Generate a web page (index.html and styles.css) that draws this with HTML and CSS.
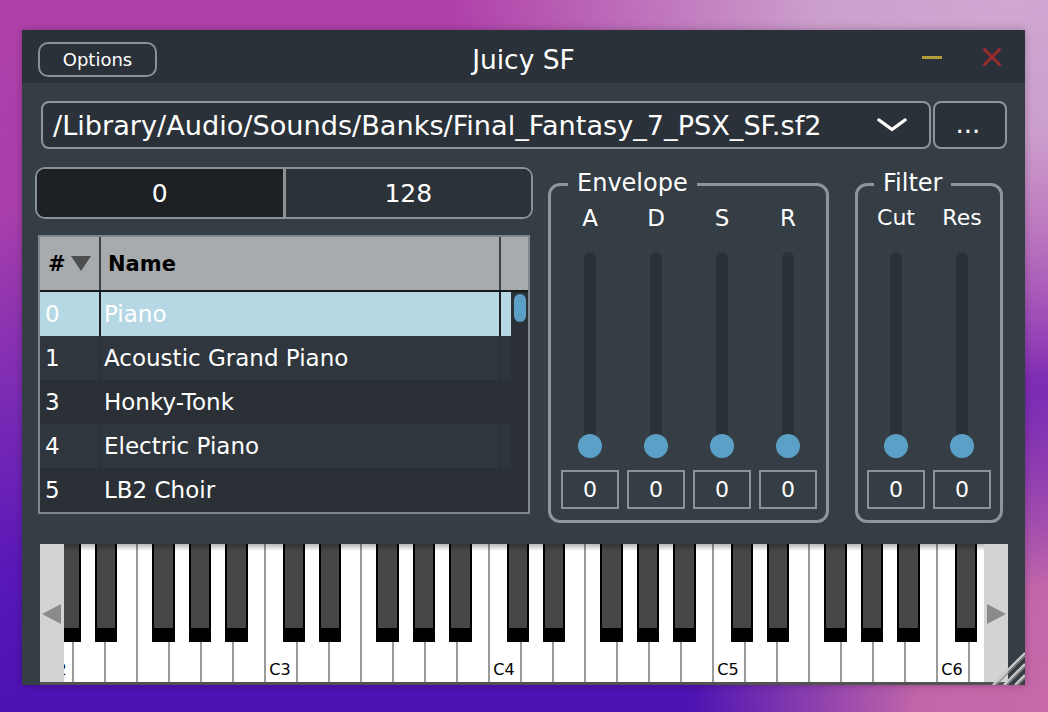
FILE: index.html
```html
<!DOCTYPE html>
<html>
<head>
<meta charset="utf-8">
<title>Juicy SF</title>
<link rel="stylesheet" href="styles.css">
</head>
<body>
<div class="window">
  <div class="titlebar">
    <div class="tb-left"><button class="options-btn">Options</button></div>
    <div class="title">Juicy SF</div>
    <div class="tb-right">
      <span class="min-btn"></span>
      <svg class="close-btn" width="20" height="20" viewBox="0 0 20 20"><path d="M1.5 1.5 L18.5 18.5 M18.5 1.5 L1.5 18.5" stroke="#a32b2b" stroke-width="2.6" fill="none"/></svg>
    </div>
  </div>

  <div class="path-row">
    <div class="combo">
      <span class="combo-text">/Library/Audio/Sounds/Banks/Final_Fantasy_7_PSX_SF.sf2</span>
      <svg class="chevron" width="30" height="14" viewBox="0 0 30 14"><path d="M2 2 L15 11.5 L28 2" stroke="#fff" stroke-width="3.4" fill="none" stroke-linecap="round" stroke-linejoin="round"/></svg>
    </div>
    <div class="browse-btn">...</div>
  </div>

  <div class="main">
    <div class="left-col">
      <div class="bank">
        <div class="bank-cell bank-sel">0</div>
        <div class="bank-sep"></div>
        <div class="bank-cell">128</div>
      </div>
      <div class="table">
        <div class="thead">
          <div class="th th-num"><span>#</span><svg width="20" height="15" viewBox="0 0 20 15"><path d="M0 0 H20 L10 15 Z" fill="#4b4d4f"/></svg></div>
          <div class="th-div"></div>
          <div class="th th-name">Name</div>
          <div class="th-div"></div>
          <div class="th"></div>
        </div>
        <div class="tbody">
          <div class="rows">
            <div class="row row-sel"><div class="cell num">0</div><div class="cdiv"></div><div class="cell name">Piano</div><div class="cdiv"></div><div class="cell"></div></div>
            <div class="row row-a"><div class="cell num">1</div><div class="cdiv"></div><div class="cell name">Acoustic Grand Piano</div><div class="cdiv"></div><div class="cell"></div></div>
            <div class="row row-b"><div class="cell num">3</div><div class="cdiv"></div><div class="cell name">Honky-Tonk</div><div class="cdiv"></div><div class="cell"></div></div>
            <div class="row row-a"><div class="cell num">4</div><div class="cdiv"></div><div class="cell name">Electric Piano</div><div class="cdiv"></div><div class="cell"></div></div>
            <div class="row row-b"><div class="cell num">5</div><div class="cdiv"></div><div class="cell name">LB2 Choir</div><div class="cdiv"></div><div class="cell"></div></div>
          </div>
          <div class="vscroll"><div class="vthumb"></div></div>
        </div>
      </div>
    </div>

    <div class="group envelope">
      <div class="group-title">Envelope</div>
      <div class="sliders">
        <div class="scol"><div class="slabel">A</div><div class="slider"><div class="track"></div><div class="thumb"></div></div><div class="sval">0</div></div>
        <div class="scol"><div class="slabel">D</div><div class="slider"><div class="track"></div><div class="thumb"></div></div><div class="sval">0</div></div>
        <div class="scol"><div class="slabel">S</div><div class="slider"><div class="track"></div><div class="thumb"></div></div><div class="sval">0</div></div>
        <div class="scol"><div class="slabel">R</div><div class="slider"><div class="track"></div><div class="thumb"></div></div><div class="sval">0</div></div>
      </div>
    </div>

    <div class="group filter">
      <div class="group-title">Filter</div>
      <div class="sliders">
        <div class="scol"><div class="slabel small">Cut</div><div class="slider"><div class="track"></div><div class="thumb"></div></div><div class="sval">0</div></div>
        <div class="scol"><div class="slabel small">Res</div><div class="slider"><div class="track"></div><div class="thumb"></div></div><div class="sval">0</div></div>
      </div>
    </div>
  </div>

  <div class="keyboard">
    <div class="wk"><span>C2</span></div><div class="wk"></div><div class="wk"></div><div class="wk"></div><div class="wk"></div><div class="wk"></div><div class="wk"></div>
    <div class="wk"><span>C3</span></div><div class="wk"></div><div class="wk"></div><div class="wk"></div><div class="wk"></div><div class="wk"></div><div class="wk"></div>
    <div class="wk"><span>C4</span></div><div class="wk"></div><div class="wk"></div><div class="wk"></div><div class="wk"></div><div class="wk"></div><div class="wk"></div>
    <div class="wk"><span>C5</span></div><div class="wk"></div><div class="wk"></div><div class="wk"></div><div class="wk"></div><div class="wk"></div><div class="wk"></div>
    <div class="wk"><span>C6</span></div><div class="wk"></div><div class="wk"></div>

    <div class="bk" style="left:18.56px"></div><div class="bk" style="left:55.04px"></div><div class="bk" style="left:112.32px"></div><div class="bk" style="left:148.8px"></div><div class="bk" style="left:185.28px"></div>
    <div class="bk" style="left:242.56px"></div><div class="bk" style="left:279.04px"></div><div class="bk" style="left:336.32px"></div><div class="bk" style="left:372.8px"></div><div class="bk" style="left:409.28px"></div>
    <div class="bk" style="left:466.56px"></div><div class="bk" style="left:503.04px"></div><div class="bk" style="left:560.32px"></div><div class="bk" style="left:596.8px"></div><div class="bk" style="left:633.28px"></div>
    <div class="bk" style="left:690.56px"></div><div class="bk" style="left:727.04px"></div><div class="bk" style="left:784.32px"></div><div class="bk" style="left:820.8px"></div><div class="bk" style="left:857.28px"></div>
    <div class="bk" style="left:914.56px"></div><div class="bk" style="left:951.04px"></div>

    <div class="kb-shadow"></div>
    <div class="kb-btn kb-left"><svg width="20" height="20" viewBox="0 0 20 20"><path d="M0 10 L19 0 V20 Z" fill="#8a8a8a"/></svg></div>
    <div class="kb-btn kb-right"><svg width="20" height="20" viewBox="0 0 20 20"><path d="M20 10 L1 0 V20 Z" fill="#8a8a8a"/></svg></div>
  </div>

  <svg class="resize-corner" width="34" height="37" viewBox="0 0 34 37">
    <path d="M2 37 L34 5" stroke="#c9c9c9" stroke-width="2.4"/>
    <path d="M5 37 L34 8" stroke="#8d8d8d" stroke-width="1.2"/>
    <path d="M13 37 L34 16" stroke="#c9c9c9" stroke-width="2.4"/>
    <path d="M16 37 L34 19" stroke="#8d8d8d" stroke-width="1.2"/>
    <path d="M24 37 L34 27" stroke="#c9c9c9" stroke-width="2.4"/>
    <path d="M27 37 L34 30" stroke="#8d8d8d" stroke-width="1.2"/>
  </svg>
</div>
</body>
</html>
```

FILE: styles.css
```css
* { box-sizing: border-box; }

html, body { margin: 0; padding: 0; }

body {
  width: 1048px;
  height: 712px;
  overflow: hidden;
  font-family: "DejaVu Sans", "Noto Sans", sans-serif;
  color: #fff;
  background:
    radial-gradient(ellipse 560px 380px at 1010px 0px, #d0a8d2 0%, #cc9ecc 35%, rgba(200, 150, 200, 0) 100%),
    radial-gradient(ellipse 380px 320px at 1070px 712px, #c86aa8 0%, #c266aa 40%, rgba(190, 100, 170, 0) 100%),
    linear-gradient(180deg, #b040a9 0%, #a83fac 30%, #7c2cb4 55%, #5a18b8 80%, #4c12b2 100%);
}

.window {
  position: relative;
  margin: 30px 0 0 22px;
  width: 1003px;
  height: 655px;
  background: #353d45;
  box-shadow: 0 0 8px rgba(0, 0, 0, 0.25);
  display: flex;
  flex-direction: column;
  overflow: hidden;
}

/* ---------- title bar ---------- */
.titlebar {
  height: 53px;
  flex: 0 0 53px;
  padding-top: 6px;
  background: #2a3138;
  display: grid;
  grid-template-columns: 1fr auto 1fr;
  align-items: center;
}

.options-btn {
  width: 119px;
  height: 35px;
  margin-left: 16px;
  padding: 0;
  border: 2px solid #8b9194;
  border-radius: 10px;
  background: transparent;
  color: #fff;
  font-family: "DejaVu Sans", sans-serif;
  font-size: 18px;
  display: block;
}

.title {
  font-size: 26.5px;
  line-height: 30px;
  color: #fff;
}

.tb-right {
  display: flex;
  justify-content: flex-end;
  align-items: center;
  gap: 40px;
  padding-right: 23px;
  margin-top: -5px;
}

.min-btn {
  display: block;
  width: 20px;
  height: 3px;
  background: #b39a3b;
}

.close-btn { display: block; }

/* ---------- path row ---------- */
.path-row {
  display: flex;
  gap: 2px;
  height: 48px;
  margin: 18px 18px 0 19px;
}

.combo {
  flex: 1;
  display: flex;
  align-items: center;
  justify-content: space-between;
  border: 2px solid #8e9598;
  border-radius: 8px;
  background: #2b3138;
  padding: 0 22px 0 10px;
}

.combo-text {
  font-size: 27.15px;
  white-space: nowrap;
}

.chevron { display: block; }

.browse-btn {
  width: 74px;
  border: 2px solid #8e9598;
  border-radius: 8px;
  background: #2b3138;
  font-size: 26px;
  display: flex;
  align-items: center;
  justify-content: center;
  padding: 0 4px 2px 0;
}

/* ---------- main area ---------- */
.main {
  display: flex;
  align-items: flex-start;
  margin-top: 18px;
  padding-left: 13px;
}

.left-col { width: 498px; }

.bank {
  height: 52px;
  display: flex;
  border: 2px solid #8b9296;
  border-radius: 10px;
  overflow: hidden;
  font-size: 25px;
}

.bank-cell {
  flex: 1;
  display: flex;
  align-items: center;
  justify-content: center;
  background: #2b3238;
}

.bank-cell.bank-sel { background: #1d2125; }

.bank-sep {
  width: 3px;
  background: #8b9296;
}

/* ---------- table ---------- */
.table {
  width: 492px;
  height: 279px;
  margin: 16px 0 0 3px;
  border: 2px solid #80878a;
  background: #2a3036;
}

.thead {
  display: grid;
  grid-template-columns: 59px 2px 398px 2px 27px;
  height: 55px;
  background: #a8abae;
  border-bottom: 2px solid #171a1d;
}

.th {
  display: flex;
  align-items: center;
  color: #000;
  font-weight: bold;
  font-size: 21px;
}

.th-num { padding-left: 8px; gap: 5px; }
.th-num svg { display: block; }
.th-name { padding-left: 7px; }

.th-div { background: #3d4144; }

.tbody { display: flex; height: 220px; }

.rows { width: 471px; }

.row {
  display: grid;
  grid-template-columns: 59px 2px 398px 2px 10px;
  height: 44px;
  font-size: 23px;
  line-height: 44px;
}

.row-a .cell { background: #2f363d; }
.row-b .cell { background: #2a3036; }
.row-sel .cell { background: #b5d8e4; }
.row-sel .cdiv { background: #1c2126; }

.cell { white-space: nowrap; }
.cell.num { padding-left: 5px; }
.cell.name { padding-left: 3px; }

.vscroll {
  width: 17px;
  padding: 2px 2px 0 3px;
}

.vthumb {
  width: 12px;
  height: 28px;
  border-radius: 6px;
  background: #5ba0c6;
}

/* ---------- groups ---------- */
.group {
  height: 340px;
  margin-top: 16px;
  border: 3px solid #8f9699;
  border-radius: 12px;
  display: flex;
  flex-direction: column;
}

.envelope { width: 281px; margin-left: 15px; }
.filter { width: 148px; margin-left: 26px; }

.group-title {
  align-self: flex-start;
  margin: -17px 0 0 17px;
  padding: 0 9px;
  height: 28px;
  line-height: 28px;
  font-size: 24px;
  background: #353d45;
}

.filter .group-title { margin-left: 16px; }

.sliders {
  display: flex;
  padding-left: 6px;
  margin-top: 6.5px;
}

.filter .sliders { padding-left: 5px; }

.scol {
  width: 66px;
  display: flex;
  flex-direction: column;
  align-items: center;
}

.slabel {
  height: 28px;
  line-height: 28px;
  font-size: 23px;
}

.slabel.small { font-size: 22px; }

.slider {
  position: relative;
  width: 24px;
  height: 206px;
  margin-top: 20.5px;
}

.track {
  width: 12px;
  height: 194px;
  margin: 0 auto;
  border-radius: 6px;
  background: #2a3138;
}

.thumb {
  position: absolute;
  left: 0;
  bottom: 0;
  width: 24px;
  height: 24px;
  border-radius: 50%;
  background: #5ba0c6;
}

.sval {
  width: 58px;
  height: 39px;
  margin-top: 12px;
  border: 2px solid #8c9396;
  font-size: 22px;
  display: flex;
  align-items: center;
  justify-content: center;
}

/* ---------- keyboard ---------- */
.keyboard {
  position: relative;
  display: flex;
  height: 141px;
  margin: 21px 17px 0 18px;
  border-bottom: 3px solid #525252;
  background: #fff;
  overflow: hidden;
}

.wk {
  flex: 0 0 32px;
  height: 100%;
  border-left: 2px solid #9a9a9a;
  background: #fff;
  display: flex;
  align-items: flex-end;
  justify-content: center;
  padding-bottom: 4px;
}

.wk span {
  font-size: 16px;
  line-height: 16px;
  color: #000;
  margin-left: -2px;
}

.bk {
  position: absolute;
  top: 0;
  width: 22.4px;
  height: 98px;
  background: #474747;
  border-left: 2.5px solid #000;
  border-right: 2px solid #000;
  border-bottom: 14px solid #000;
}

.kb-shadow {
  position: absolute;
  left: 0;
  right: 0;
  top: 0;
  height: 7px;
  background: linear-gradient(180deg, rgba(0, 0, 0, 0.28), rgba(0, 0, 0, 0));
}

.kb-btn {
  position: absolute;
  top: 0;
  bottom: 0;
  width: 24px;
  background: #d3d3d3;
  display: flex;
  align-items: center;
  justify-content: center;
  padding-top: 1px;
}

.kb-btn svg { display: block; }
.kb-left { left: 0; }
.kb-right { right: 0; }

.resize-corner {
  position: absolute;
  right: 0;
  bottom: 0;
  display: block;
}
```
